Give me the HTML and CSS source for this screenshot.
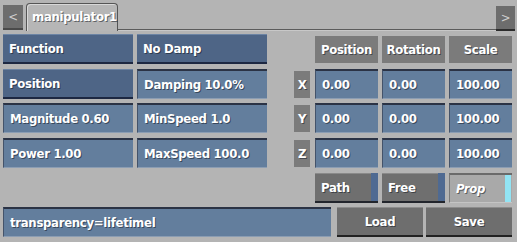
FILE: index.html
```html
<!DOCTYPE html>
<html>
<head>
<meta charset="utf-8">
<link rel="stylesheet" href="styles.css">
</head>
<body>
<div class="app">
  <div class="tabbar">
    <div class="nav prev">&lt;</div>
    <div class="tab">manipulator1</div>
    <div class="tabfill"></div>
    <div class="nav next">&gt;</div>
  </div>
  <div class="main">
    <div class="left">
      <div class="btn raised">Function</div>
      <div class="btn raised">No Damp</div>
      <div class="btn raised">Position</div>
      <div class="btn field">Damping 10.0%</div>
      <div class="btn field">Magnitude 0.60</div>
      <div class="btn field">MinSpeed 1.0</div>
      <div class="btn field">Power 1.00</div>
      <div class="btn field">MaxSpeed 100.0</div>
    </div>
    <div class="right">
      <div class="blank"></div>
      <div class="hdr">Position</div>
      <div class="hdr">Rotation</div>
      <div class="hdr">Scale</div>

      <div class="axis">X</div>
      <div class="btn field">0.00</div>
      <div class="btn field">0.00</div>
      <div class="btn field">100.00</div>

      <div class="axis">Y</div>
      <div class="btn field">0.00</div>
      <div class="btn field">0.00</div>
      <div class="btn field">100.00</div>

      <div class="axis">Z</div>
      <div class="btn field">0.00</div>
      <div class="btn field">0.00</div>
      <div class="btn field">100.00</div>

      <div class="blank"></div>
      <div class="mode">Path<span class="stripe"></span></div>
      <div class="mode">Free<span class="stripe"></span></div>
      <div class="mode on">Prop<span class="stripe"></span></div>
    </div>
  </div>
  <div class="bottom">
    <div class="btn field text">transparency=lifetimel</div>
    <div class="act">Load</div>
    <div class="act">Save</div>
  </div>
</div>
</body>
</html>
```

FILE: styles.css
```css
html, body {
  margin: 0;
  padding: 0;
  background: #b4b4b4;
}
.app {
  width: 517px;
  height: 242px;
  overflow: hidden;
  font-family: "DejaVu Sans Condensed", "Liberation Sans Narrow", "Liberation Sans", sans-serif;
  font-weight: bold;
  font-size: 13px;
  letter-spacing: -0.3px;
  color: #fff;
  text-shadow: 1px 1px 0 rgba(20, 25, 35, 0.55);
}
.tabbar {
  display: flex;
  align-items: flex-end;
  height: 31px;
  box-sizing: border-box;
  padding-left: 3px;
  padding-right: 2px;
}
.nav {
  box-sizing: border-box;
  width: 20px;
  height: 25px;
  background: #6d6d6d;
  color: #cfcfcf;
  font-weight: normal;
  display: flex;
  align-items: center;
  justify-content: center;
  font-size: 13px;
  text-shadow: none;
  border-bottom: 2px solid #3c3c3c;
  margin-bottom: 1px;
}
.prev { margin-right: 3px; border-bottom-color: #4a4a4a; }
.next { width: 19px; border-bottom-color: #2c2c2c; margin-bottom: 0; }
.tab {
  box-sizing: border-box;
  width: 92px;
  height: 28px;
  padding: 5px 0 0 5px;
  border: 1px solid #555;
  border-bottom: none;
  border-radius: 4px 4px 0 0;
  background: #b6b6b6;
  box-shadow: inset 1px 1px 0 #d8d8d8;
  font-size: 13px;
  white-space: nowrap;
}
.tabfill {
  flex: 1;
  align-self: stretch;
  border-bottom: 1px solid #5c5c5c;
  box-shadow: 0 1px 0 #c8c8c8;
  margin-bottom: 1px;
}
.main {
  display: flex;
  padding: 3px 0 0 3px;
  gap: 27px;
}
.left {
  display: grid;
  grid-template-columns: 130px 130px;
  grid-template-rows: repeat(4, 30px);
  column-gap: 4px;
  row-gap: 4.7px;
}
.right {
  display: grid;
  grid-template-columns: 17px 63px 63px 63px;
  grid-template-rows: repeat(5, 30px);
  column-gap: 4px;
  row-gap: 4.7px;
}
.btn {
  box-sizing: border-box;
  display: flex;
  align-items: center;
  padding-left: 6px;
  white-space: nowrap;
}
.raised {
  background: #4e6586;
  border-top: 1px solid #6c84a4;
  border-bottom: 2px solid #1d2842;
}
.field {
  background: #637e9d;
  border-top: 2px solid #2b3345;
  border-left: 1px solid #44536a;
  border-bottom: 1px solid #8b9db3;
}
.hdr {
  box-sizing: border-box;
  margin: 2px 0 1px;
  background: #7b7b7b;
  display: flex;
  align-items: center;
  justify-content: center;
}
.axis {
  box-sizing: border-box;
  width: 16px;
  margin: 2px 0 1px;
  background: #7b7b7b;
  display: flex;
  align-items: center;
  justify-content: center;
}
.mode {
  position: relative;
  box-sizing: border-box;
  background: #6f6f6f;
  border-bottom: 2px solid #22252c;
  border-top: 1px solid #8a8a8a;
  display: flex;
  align-items: center;
  padding-left: 6px;
}
.mode .stripe {
  position: absolute;
  right: 0;
  top: -1px;
  bottom: 0;
  width: 7px;
  background: #4f6a92;
}
.mode.on {
  background: #a9a9a9;
  border-top: 2px solid #6a6a6a;
  border-left: 1px solid #7a7a7a;
  border-bottom: 1px solid #c4c4c4;
  font-style: italic;
}
.mode.on .stripe {
  background: #92e4f4;
  top: 0;
  right: 1px;
  width: 6px;
}
.bottom {
  display: flex;
  padding: 4px 5px 0 3px;
  height: 30px;
}
.text {
  width: 328px;
  margin-right: 6px;
}
.act {
  box-sizing: border-box;
  width: 86px;
  margin-right: 3px;
  background: #6e6e6e;
  border-top: 1px solid #8c8c8c;
  border-bottom: 2px solid #222;
  display: flex;
  align-items: center;
  justify-content: center;
}
.act:last-child { margin-right: 0; }
```
